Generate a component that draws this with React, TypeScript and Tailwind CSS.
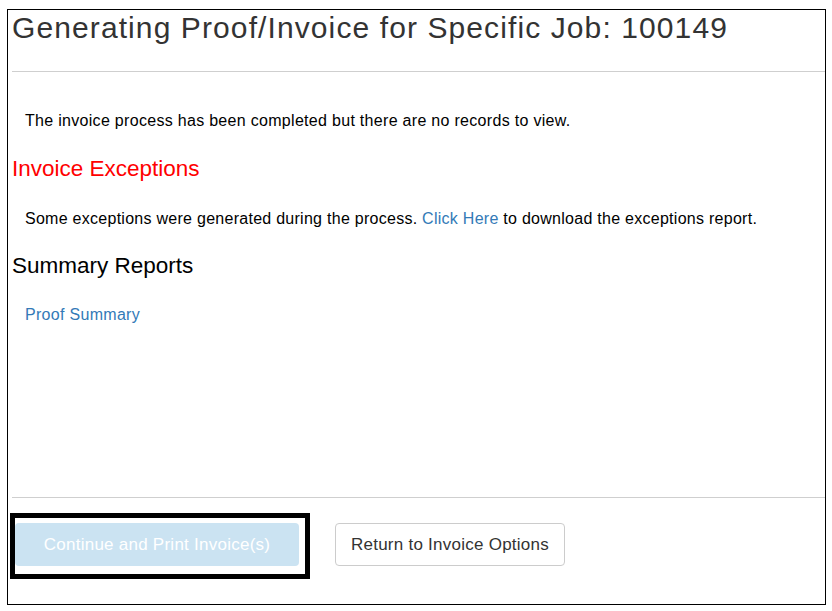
export default function App() {
  return (
    <div className="relative w-[832px] h-[611px] bg-white font-['Liberation_Sans',Arial,sans-serif] text-black overflow-hidden">
      <div className="ml-[7px] mt-[9px] w-[819px] h-[596px] border border-black flex flex-col">
        <h1 className="mt-[1px] pl-[4px] text-[30px] leading-[34px] tracking-[1.1px] text-[#333]">
          Generating Proof/Invoice for Specific Job: 100149
        </h1>
        <div className="mt-[26px] ml-[4px] h-px bg-[#cfcfcf]" />
        <p className="mt-[38px] pl-[17px] text-[16px] leading-[22px] tracking-[0.3px]">
          The invoice process has been completed but there are no records to view.
        </p>
        <h2 className="mt-[24px] pl-[4px] text-[22.5px] leading-[26px] text-[#ff0000]">Invoice Exceptions</h2>
        <p className="mt-[26px] pl-[17px] text-[16px] leading-[22px] tracking-[0.27px]">
          Some exceptions were generated during the process.{" "}
          <span className="text-[#337ab7]">Click Here</span> to download the exceptions report.
        </p>
        <h2 className="mt-[23px] pl-[4px] text-[22.5px] leading-[26px]">Summary Reports</h2>
        <p className="mt-[25px] pl-[17px] text-[16px] leading-[22px] tracking-[0.3px] text-[#337ab7]">Proof Summary</p>
        <div className="mt-auto ml-[4px] h-px bg-[#cfcfcf]" />
        <div className="mt-[25px] mb-[38px] pl-[7px] flex items-center gap-[36px]">
          <div className="w-[284px] h-[43px] rounded-[4px] bg-[#cbe3f2] text-white text-[17px] tracking-[0.25px] flex items-center justify-center">
            Continue and Print Invoice(s)
          </div>
          <div className="w-[230px] h-[43px] rounded-[4px] border border-[#cccccc] bg-white text-[#333] text-[17px] tracking-[0.25px] flex items-center justify-center">
            Return to Invoice Options
          </div>
        </div>
      </div>
      <div className="absolute left-[10px] top-[513px] w-[300px] h-[66px] border-[5px] border-black" />
    </div>
  );
}
